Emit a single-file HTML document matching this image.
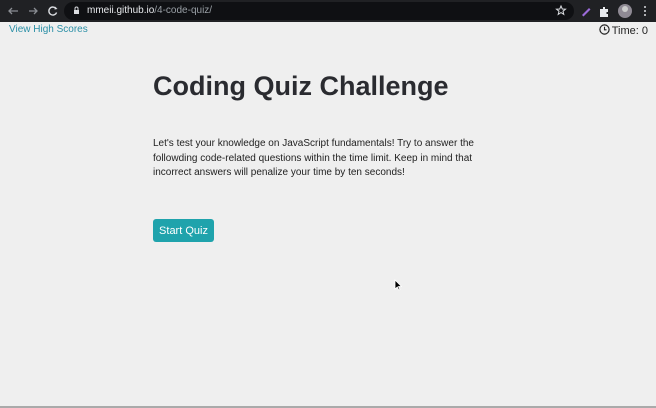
<!DOCTYPE html>
<html><head><meta charset="utf-8"><style>
*{margin:0;padding:0;box-sizing:border-box}
html,body{width:656px;height:408px;overflow:hidden;background:#efefef;font-family:"Liberation Sans",sans-serif}
.bar{position:absolute;left:0;top:0;width:656px;height:22px;background:#202124}
.pill{position:absolute;left:64px;top:2px;width:510px;height:18px;border-radius:9px;background:#0f1013}
.url{position:absolute;left:87px;top:5px;font-size:10px;color:#e8eaed}
.url span{color:#9aa0a6}
.link{position:absolute;left:9px;top:24px;font-size:10px;color:#2a8fa6}
.time{position:absolute;right:8px;top:24px;font-size:11px;color:#222}
h1{position:absolute;left:153px;top:71px;font-size:27px;font-weight:bold;color:#2a2b30;letter-spacing:0;white-space:nowrap}
p{position:absolute;left:153px;top:137px;font-size:10px;line-height:14.6px;color:#222;white-space:nowrap}
.btn{position:absolute;left:153px;top:219px;width:61px;height:23px;border-radius:3px;background:#1fa3ac;color:#fff;font-size:11px;text-align:center;line-height:24px}
.bottom{position:absolute;left:0;top:406px;width:656px;height:2px;background:#aaa}
</style></head><body>
<div class="bar">
<div class="pill"></div>
<svg style="position:absolute;left:0;top:0" width="656" height="22">
<g stroke="#8a8d93" stroke-width="1.3" fill="none">
<path d="M18 11H9M12 8l-3 3 3 3"/>
<path d="M29 11h8M34 8l3 3-3 3"/>
</g>
<path d="M56 8.5a4 4 0 1 0 .6 4" stroke="#dadce0" stroke-width="1.4" fill="none"/>
<path d="M55 6.5l2.5 2.5-3 .5z" fill="#dadce0"/>
<rect x="74" y="10" width="5" height="4" fill="#dadce0"/>
<path d="M75 10V8.5a1.5 1.5 0 0 1 3 0V10" stroke="#dadce0" fill="none"/>
<path d="M561 6l1.3 3 3.2.2-2.5 2 .8 3.2-2.8-1.8-2.8 1.8.8-3.2-2.5-2 3.2-.2z" stroke="#dadce0" fill="none"/>
<path d="M582 15l7-7 1.5 1.5-7 7z" fill="#9c6bd9"/>
<path d="M600 9h3v-2h2v2h3v3h-1.5v2h1.5v3h-8z" fill="#e8eaed"/>
<circle cx="625" cy="11" r="7" fill="#8f8a94"/><circle cx="625" cy="9" r="3" fill="#ccc"/>
<g fill="#dadce0"><circle cx="645" cy="7" r="1"/><circle cx="645" cy="11" r="1"/><circle cx="645" cy="15" r="1"/></g>
</svg>
<div class="url">mmeii.github.io<span>/4-code-quiz/</span></div>
</div>
<div class="link">View High Scores</div>
<div class="time"><svg width="11" height="11" style="vertical-align:-1px;margin-right:2px"><circle cx="5.5" cy="5.5" r="4.6" stroke="#222" stroke-width="1.2" fill="none"/><path d="M5.5 2.8v3h2" stroke="#222" stroke-width="1.1" fill="none"/></svg>Time: 0</div>
<h1>Coding Quiz Challenge</h1>
<p>Let's test your knowledge on JavaScript fundamentals! Try to answer the<br>followding code-related questions within the time limit. Keep in mind that<br>incorrect answers will penalize your time by ten seconds!</p>
<div class="btn">Start Quiz</div>
<svg style="position:absolute;left:394px;top:279px" width="8" height="12"><path d="M1 1v9l2.3-2 1.5 3 1.2-.6-1.5-2.9H7.5z" fill="#000" stroke="#fff" stroke-width=".8"/></svg>
<div class="bottom"></div>
</body></html>
